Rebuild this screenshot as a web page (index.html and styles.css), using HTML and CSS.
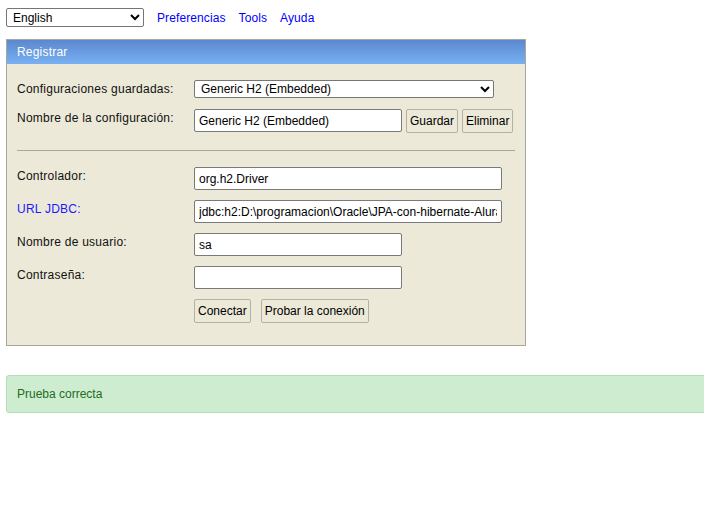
FILE: index.html
```html
<!DOCTYPE html>
<html lang="es">
<head>
  <meta charset="utf-8">
  <title>H2 Console</title>
  <link rel="stylesheet" href="styles.css">
</head>
<body>

<div class="topbar">
  <select class="lang">
    <option>English</option>
  </select>
  <a href="#">Preferencias</a>
  <a href="#">Tools</a>
  <a href="#">Ayuda</a>
</div>

<div class="panel">
  <div class="panel-head">Registrar</div>
  <div class="panel-body">
    <div class="row">
      <div class="label">Configuraciones guardadas:</div>
      <select class="setting">
        <option>Generic H2 (Embedded)</option>
      </select>
    </div>
    <div class="row">
      <div class="label">Nombre de la configuración:</div>
      <input class="field short" type="text" value="Generic H2 (Embedded)">
      <button class="btn">Guardar</button>
      <button class="btn">Eliminar</button>
    </div>

    <hr class="sep">

    <div class="row">
      <div class="label">Controlador:</div>
      <input class="field long" type="text" value="org.h2.Driver">
    </div>
    <div class="row">
      <div class="label"><a href="#" class="jdbc">URL JDBC:</a></div>
      <input class="field long" type="text" value="jdbc:h2:D:\programacion\Oracle\JPA-con-hibernate-Alura">
    </div>
    <div class="row">
      <div class="label">Nombre de usuario:</div>
      <input class="field short" type="text" value="sa">
    </div>
    <div class="row">
      <div class="label">Contraseña:</div>
      <input class="field short" type="password" value="">
    </div>
    <div class="row actions">
      <div class="label"></div>
      <button class="btn">Conectar</button>
      <button class="btn gap">Probar la conexión</button>
    </div>
  </div>
</div>

<div class="success">Prueba correcta</div>

</body>
</html>
```

FILE: styles.css
```css
html { overflow: hidden }
body { background: white; font-family: "Liberation Sans", Arial, sans-serif; font-size: 12px; margin: 0; padding: 8px 6px }

a { color: #0000ff; text-decoration: none }

.topbar { align-items: center; display: flex; height: 19px }
.topbar a { margin-left: 13px; font-size: 12px; letter-spacing: 0.1px }
select.lang { background: white; border: 1px solid #767676; border-radius: 2px; font-family: "Liberation Sans", Arial, sans-serif; font-size: 12px; height: 19px; padding: 0 2px; width: 138px; color: black }

.panel { background: #ece9d8; border: 1px solid #a9a79c; margin-top: 12px; width: 518px }
.panel-head { background: linear-gradient(#5b88cf, #78b1f2); color: white; font-size: 12px; height: 24px; line-height: 24px; padding-left: 10px; letter-spacing: 0.2px }
.panel-body { padding: 16px 10px 22px 10px }

.row { align-items: flex-start; display: flex; margin-bottom: 10px }
.row:first-child { margin-bottom: 11px }
.row:last-child { margin-bottom: 0 }
.label { color: #111; padding-top: 2px; width: 177px; flex-shrink: 0; letter-spacing: 0.25px }
.label a.jdbc { color: #1a1aff }

select.setting { background: white; border: 1px solid #767676; border-radius: 2px; font-family: "Liberation Sans", Arial, sans-serif; font-size: 12px; height: 18px; padding: 0 2px; width: 300px; color: black }

.field { background: white; border: 1px solid #7a7a7a; border-radius: 2px; box-sizing: border-box; font-family: "Liberation Sans", Arial, sans-serif; font-size: 12px; height: 23px; padding: 1px 4px; color: black }
.field.short { width: 208px }
.field.long { width: 308px }

.btn { background: #ece9d8; border: 1px solid #b3b0a4; border-radius: 2px; box-sizing: border-box; color: black; font-family: "Liberation Sans", Arial, sans-serif; font-size: 12px; height: 24px; margin-left: 4px; padding: 0 3px }
.actions .btn:first-of-type { margin-left: 0 }
.actions .btn.gap { margin-left: 10px }

hr.sep { border: 0; border-top: 1px solid #a9a79c; margin: 17px 0 16px 0 }

.success { background: #ceedd0; border: 1px solid #b6dcb8; border-radius: 3px; box-sizing: border-box; color: #236b22; margin-top: 29px; margin-right: -20px; height: 38px; line-height: 36px; padding-left: 10px }
```
